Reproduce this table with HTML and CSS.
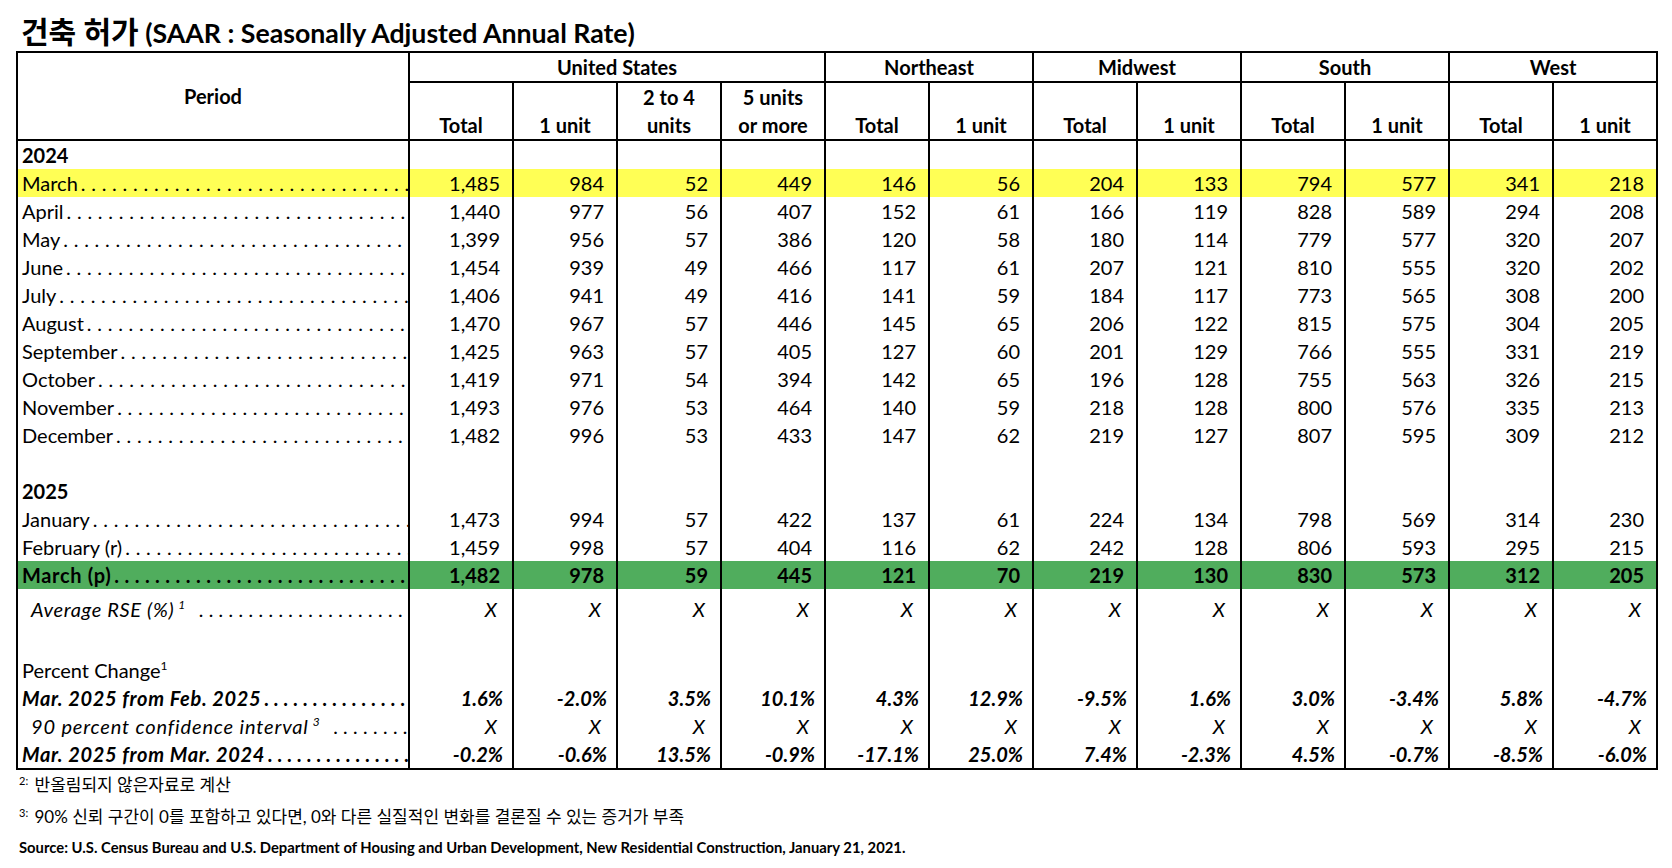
FILE: index.html
```html
<!DOCTYPE html>
<html lang="ko">
<head>
<meta charset="utf-8">
<title>건축 허가</title>
<link rel="stylesheet" href="styles.css">
</head>
<body>
<div class="page">
  <h1 class="title"><span class="ko">건축 허가</span> (SAAR : Seasonally Adjusted Annual Rate)</h1>
  <table class="grid">
    <colgroup>
      <col class="c0"><col class="cn"><col class="cn"><col class="cn"><col class="cn"><col class="cn"><col class="cn"><col class="cn"><col class="cn"><col class="cn"><col class="cn"><col class="cn"><col class="cn">
    </colgroup>
    <thead>
      <tr class="hr1">
        <th rowspan="2" class="period">Period</th>
        <th colspan="4" class="grp">United States</th>
        <th colspan="2" class="grp">Northeast</th>
        <th colspan="2" class="grp">Midwest</th>
        <th colspan="2" class="grp">South</th>
        <th colspan="2" class="grp">West</th>
      </tr>
      <tr class="hr2">
        <th>Total</th><th>1 unit</th><th>2 to 4<br>units</th><th>5 units<br>or more</th>
        <th>Total</th><th>1 unit</th><th>Total</th><th>1 unit</th>
        <th>Total</th><th>1 unit</th><th>Total</th><th>1 unit</th>
      </tr>
    </thead>
    <tbody>
      <tr><td class="lbl b">2024</td><td></td><td></td><td></td><td></td><td></td><td></td><td></td><td></td><td></td><td></td><td></td><td></td></tr>
      <tr class="yellow"><td class="lbl"><div class="lead"><span>March</span><span class="dots"></span></div></td><td>1,485</td><td>984</td><td>52</td><td>449</td><td>146</td><td>56</td><td>204</td><td>133</td><td>794</td><td>577</td><td>341</td><td>218</td></tr>
      <tr><td class="lbl"><div class="lead"><span>April</span><span class="dots"></span></div></td><td>1,440</td><td>977</td><td>56</td><td>407</td><td>152</td><td>61</td><td>166</td><td>119</td><td>828</td><td>589</td><td>294</td><td>208</td></tr>
      <tr><td class="lbl"><div class="lead"><span>May</span><span class="dots"></span></div></td><td>1,399</td><td>956</td><td>57</td><td>386</td><td>120</td><td>58</td><td>180</td><td>114</td><td>779</td><td>577</td><td>320</td><td>207</td></tr>
      <tr><td class="lbl"><div class="lead"><span>June</span><span class="dots"></span></div></td><td>1,454</td><td>939</td><td>49</td><td>466</td><td>117</td><td>61</td><td>207</td><td>121</td><td>810</td><td>555</td><td>320</td><td>202</td></tr>
      <tr><td class="lbl"><div class="lead"><span>July</span><span class="dots"></span></div></td><td>1,406</td><td>941</td><td>49</td><td>416</td><td>141</td><td>59</td><td>184</td><td>117</td><td>773</td><td>565</td><td>308</td><td>200</td></tr>
      <tr><td class="lbl"><div class="lead"><span>August</span><span class="dots"></span></div></td><td>1,470</td><td>967</td><td>57</td><td>446</td><td>145</td><td>65</td><td>206</td><td>122</td><td>815</td><td>575</td><td>304</td><td>205</td></tr>
      <tr><td class="lbl"><div class="lead"><span>September</span><span class="dots"></span></div></td><td>1,425</td><td>963</td><td>57</td><td>405</td><td>127</td><td>60</td><td>201</td><td>129</td><td>766</td><td>555</td><td>331</td><td>219</td></tr>
      <tr><td class="lbl"><div class="lead"><span>October</span><span class="dots"></span></div></td><td>1,419</td><td>971</td><td>54</td><td>394</td><td>142</td><td>65</td><td>196</td><td>128</td><td>755</td><td>563</td><td>326</td><td>215</td></tr>
      <tr><td class="lbl"><div class="lead"><span>November</span><span class="dots"></span></div></td><td>1,493</td><td>976</td><td>53</td><td>464</td><td>140</td><td>59</td><td>218</td><td>128</td><td>800</td><td>576</td><td>335</td><td>213</td></tr>
      <tr><td class="lbl"><div class="lead"><span>December</span><span class="dots"></span></div></td><td>1,482</td><td>996</td><td>53</td><td>433</td><td>147</td><td>62</td><td>219</td><td>127</td><td>807</td><td>595</td><td>309</td><td>212</td></tr>
      <tr><td class="lbl"></td><td></td><td></td><td></td><td></td><td></td><td></td><td></td><td></td><td></td><td></td><td></td><td></td></tr>
      <tr><td class="lbl b">2025</td><td></td><td></td><td></td><td></td><td></td><td></td><td></td><td></td><td></td><td></td><td></td><td></td></tr>
      <tr><td class="lbl"><div class="lead"><span>January</span><span class="dots"></span></div></td><td>1,473</td><td>994</td><td>57</td><td>422</td><td>137</td><td>61</td><td>224</td><td>134</td><td>798</td><td>569</td><td>314</td><td>230</td></tr>
      <tr><td class="lbl"><div class="lead"><span>February (r)</span><span class="dots"></span></div></td><td>1,459</td><td>998</td><td>57</td><td>404</td><td>116</td><td>62</td><td>242</td><td>128</td><td>806</td><td>593</td><td>295</td><td>215</td></tr>
      <tr class="green"><td class="lbl"><div class="lead"><span class="wide">March (p)</span><span class="dots"></span></div></td><td>1,482</td><td>978</td><td>59</td><td>445</td><td>121</td><td>70</td><td>219</td><td>130</td><td>830</td><td>573</td><td>312</td><td>205</td></tr>
      <tr class="rse it x"><td class="lbl ind"><div class="lead"><span class="wide">Average RSE (%)<sup>1</sup></span><span class="dots gap"></span></div></td><td>X</td><td>X</td><td>X</td><td>X</td><td>X</td><td>X</td><td>X</td><td>X</td><td>X</td><td>X</td><td>X</td><td>X</td></tr>
      <tr><td class="lbl"></td><td></td><td></td><td></td><td></td><td></td><td></td><td></td><td></td><td></td><td></td><td></td><td></td></tr>
      <tr><td class="lbl">Percent Change<sup class="tight">1</sup></td><td></td><td></td><td></td><td></td><td></td><td></td><td></td><td></td><td></td><td></td><td></td><td></td></tr>
      <tr class="bi pct"><td class="lbl"><div class="lead"><span class="wide">Mar. 2025 from Feb. 2025</span><span class="dots"></span></div></td><td>1.6%</td><td>-2.0%</td><td>3.5%</td><td>10.1%</td><td>4.3%</td><td>12.9%</td><td>-9.5%</td><td>1.6%</td><td>3.0%</td><td>-3.4%</td><td>5.8%</td><td>-4.7%</td></tr>
      <tr class="it x"><td class="lbl ind"><div class="lead"><span class="wider">90 percent confidence interval<sup>3</sup></span><span class="dots gap"></span></div></td><td>X</td><td>X</td><td>X</td><td>X</td><td>X</td><td>X</td><td>X</td><td>X</td><td>X</td><td>X</td><td>X</td><td>X</td></tr>
      <tr class="bi pct"><td class="lbl"><div class="lead"><span class="wide">Mar. 2025 from Mar. 2024</span><span class="dots"></span></div></td><td>-0.2%</td><td>-0.6%</td><td>13.5%</td><td>-0.9%</td><td>-17.1%</td><td>25.0%</td><td>7.4%</td><td>-2.3%</td><td>4.5%</td><td>-0.7%</td><td>-8.5%</td><td>-6.0%</td></tr>
    </tbody>
  </table>
  <p class="fn fn2"><sup class="fnmark">2:</sup> 반올림되지 않은자료로 계산</p>
  <p class="fn fn3"><sup class="fnmark">3:</sup> 90% 신뢰 구간이 0를 포함하고 있다면, 0와 다른 실질적인 변화를 결론질 수 있는 증거가 부족</p>
  <p class="source">Source: U.S. Census Bureau and U.S. Department of Housing and Urban Development, New Residential Construction, January 21, 2021.</p>
</div>
</body>
</html>
```
FILE: styles.css
```css
* { box-sizing: border-box; }
html, body { margin: 0; padding: 0; background: #ffffff; color: #000000; }
body { font-family: Lato, "Noto Sans CJK KR", sans-serif; }

.page { padding-left: 16px; }

.title {
  margin: 13px 0 0 5px;
  height: 38px;
  font-size: 26.7px;
  font-weight: 700;
  line-height: 36px;
  white-space: nowrap;
}
.title .ko { font-size: 30px; }

.grid {
  width: 1642px;
  border-collapse: collapse;
  table-layout: fixed;
  font-size: 20px;
  border: 2px solid #000;
}
.c0 { width: 392px; }
.cn { width: 104px; }

.grid th, .grid td {
  padding: 0;
  border-left: 2px solid #000;
  border-right: 2px solid #000;
  white-space: nowrap;
  overflow: hidden;
}

.grid thead th { font-weight: 700; }
.hr1 { height: 30px; }
.grp { border-bottom: 2px solid #000; text-align: center; vertical-align: middle; line-height: 28px; }
.period { text-align: center; vertical-align: middle; border-bottom: 2px solid #000; padding-bottom: 3px; }
.hr2 th {
  height: 55px;
  vertical-align: bottom;
  line-height: 28px;
  padding-bottom: 0;
  text-align: center;
  border-bottom: 2px solid #000;
}

.grid tbody tr { height: 28px; }
.grid tbody td {
  line-height: 28px;
  text-align: right;
  padding-right: 12px;
}
.grid tbody td.lbl { text-align: left; padding: 0 0 0 4px; }
.grid tbody td.ind { padding-left: 13px; }
.b { font-weight: 700; }
.wide { letter-spacing: 0.65px; }
.wider { letter-spacing: 0.85px; }

.lead { display: flex; align-items: baseline; }
.lead > span:first-child { flex: none; }
.dots { flex: 1; overflow: hidden; white-space: nowrap; margin-left: 3px; }
.dots::after {
  content: ". . . . . . . . . . . . . . . . . . . . . . . . . . . . . . . . . . . . . . . . . . . . . . . . . . . . . . . . . . . . . . . . . . . . . . . . . . . . . . . . . . . . . . . . . . . . . . . .";
  letter-spacing: 0.3px;
}
.dots.gap { margin-left: 14px; }

.yellow td { background: #ffff55; }
.green td { background: #50ad5d; font-weight: 700; }

.grid tbody tr.rse { height: 39px; }
.it td { font-style: italic; }
.bi td { font-weight: 700; font-style: italic; }
.grid tbody .pct td { padding-right: 9px; }
.grid tbody .x td { padding-right: 15px; }
.grid tbody .pct td.lbl, .grid tbody .x td.lbl { padding-right: 0; }

sup { font-size: 12px; line-height: 0; vertical-align: 8px; margin-left: 4px; letter-spacing: 0; }
sup.tight { margin-left: 0; }

.fn {
  margin: 0;
  padding-left: 3px;
  font-size: 17px;
  line-height: 28px;
  white-space: nowrap;
}
.fn2 { margin-top: 1px; }
.fn3 { margin-top: 4px; }
.fnmark { font-size: 11px; margin: 0 2px 0 0; vertical-align: 6px; }
.source {
  margin: 2px 0 0 3px;
  font-size: 14.8px;
  font-weight: 700;
  line-height: 28px;
  white-space: nowrap;
}
```
